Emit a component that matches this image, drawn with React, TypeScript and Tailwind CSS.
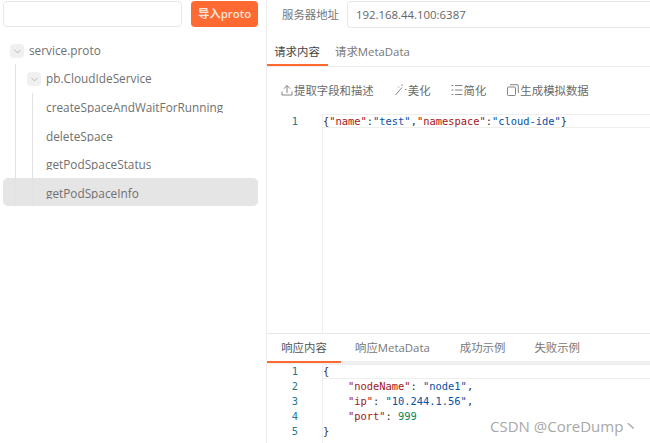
import { ChevronDown } from "lucide-react";

const uiFont =
  "font-['Open_Sans','Noto_Sans_CJK_SC',sans-serif]";
const monoFont =
  "font-['DejaVu_Sans_Mono','Noto_Sans_CJK_SC',monospace]";

function Tree() {
  return (
    <div className={`relative mt-[10px] text-[11.8px] text-[#707070] ${uiFont}`}>
      <div className="absolute left-[15px] top-[27px] h-[142px] w-px bg-[#e2e2e2]" />
      <div className="absolute left-[32px] top-[56px] h-[113px] w-px bg-[#e2e2e2]" />
      <div className="flex h-[28px] items-center pl-[10px]">
        <span className="flex h-[14px] w-[14px] items-center justify-center rounded-sm bg-[#f0f0f0]">
          <ChevronDown size={11} strokeWidth={1.2} className="text-[#888]" />
        </span>
        <span className="ml-[5px]">service.proto</span>
      </div>
      <div className="flex h-[28px] items-center pl-[27px]">
        <span className="flex h-[14px] w-[14px] items-center justify-center rounded-sm bg-[#f0f0f0]">
          <ChevronDown size={11} strokeWidth={1.2} className="text-[#888]" />
        </span>
        <span className="ml-[5px]">pb.CloudIdeService</span>
      </div>
      <div className="flex h-[28px] items-start pl-[46px] pt-[4px] leading-[20px]">
        <span className="h-[16px] overflow-hidden">createSpaceAndWaitForRunning</span>
      </div>
      <div className="flex h-[29px] items-start pl-[46px] pt-[5px] leading-[20px]">
        <span className="h-[16px] overflow-hidden">deleteSpace</span>
      </div>
      <div className="flex h-[28px] items-start pl-[46px] pt-[4px] leading-[20px]">
        <span className="h-[16px] overflow-hidden">getPodSpaceStatus</span>
      </div>
      <div className="mx-[3px] flex h-[28px] w-[255px] items-start rounded-[5px] bg-[#e5e5e5] pl-[43px] pt-[5px] leading-[20px]">
        <span className="h-[16px] overflow-hidden">getPodSpaceInfo</span>
      </div>
    </div>
  );
}

function ExtractIcon() {
  return (
    <svg width="12" height="12" viewBox="0 0 12 12" fill="none" stroke="#777" strokeWidth="0.9">
      <path d="M1 7.5v3.5h10V7.5" />
      <path d="M6 9V1.5M2.8 4.7 6 1.5l3.2 3.2" />
    </svg>
  );
}

function WandIcon() {
  return (
    <svg width="13" height="12" viewBox="0 0 13 12" fill="none" stroke="#777" strokeWidth="0.9">
      <path d="M1.5 11 8 3.5" />
      <path d="M8 .5v1.5M11 5.5h1.5M4 2.5l1 1" />
    </svg>
  );
}

function SimplifyIcon() {
  return (
    <svg width="12" height="12" viewBox="0 0 12 12" fill="none" stroke="#777" strokeWidth="0.9">
      <path d="M0.5 1.5h2M4 1.5h7.5M0.5 6h2M4 6h7.5M0.5 10.5h2M4 10.5h7.5" />
    </svg>
  );
}

function CopyIcon() {
  return (
    <svg width="12" height="12" viewBox="0 0 12 12" fill="none" stroke="#777" strokeWidth="0.9">
      <rect x="0.5" y="3" width="8" height="8.5" rx="1" />
      <path d="M3 .7h7a1.3 1.3 0 0 1 1.3 1.3v7" />
    </svg>
  );
}

const responseLines = [
  <span className="text-[#333]">{"{"}</span>,
  <>
    <span className="pl-[25px] text-[#a31515]">"nodeName"</span>
    <span className="text-[#333]">: </span>
    <span className="text-[#0451a5]">"node1"</span>
    <span className="text-[#333]">,</span>
  </>,
  <>
    <span className="pl-[25px] text-[#a31515]">"ip"</span>
    <span className="text-[#333]">: </span>
    <span className="text-[#0451a5]">"10.244.1.56"</span>
    <span className="text-[#333]">,</span>
  </>,
  <>
    <span className="pl-[25px] text-[#a31515]">"port"</span>
    <span className="text-[#333]">: </span>
    <span className="text-[#098658]">999</span>
  </>,
  <span className="text-[#333]">{"}"}</span>,
];

export default function App() {
  return (
    <div className="relative flex h-[443px] w-[650px] overflow-hidden bg-white">
      <aside className="h-full w-[267px] shrink-0 border-r border-[#ececec]">
        <div className="flex pl-[3px] pt-[1px]">
          <div className="h-[26px] w-[179px] rounded-[4px] border border-[#e8e8e8] bg-white" />
          <button
            type="button"
            className={`ml-[9px] h-[26px] w-[67px] rounded-[4px] bg-[#ff6a33] text-[11.4px] font-semibold text-[#fde3d8] ${uiFont}`}
          >
            导入proto
          </button>
        </div>
        <Tree />
      </aside>

      <main className={`flex min-w-0 flex-1 flex-col text-[11.4px] text-[#777] ${uiFont}`}>
        <div className="flex h-[28px] items-center pl-[15px] pt-[1px]">
          <span className="w-[65px] shrink-0">服务器地址</span>
          <div className="flex h-[27px] flex-1 items-center rounded-l-[4px] border border-r-0 border-[#e8e8e8] pl-[8px] text-[#666]">
            192.168.44.100:6387
          </div>
        </div>

        <div className="mt-[10px] flex h-[29px] items-center border-b border-[#ededed] pb-[1px]">
          <div className="relative flex h-full w-[61px] items-center justify-center pr-[1px] text-[#444]">
            请求内容
            <div className="absolute bottom-[-1px] left-0 h-[2px] w-full bg-[#ff6a33]" />
          </div>
          <span className="ml-[7px]">请求MetaData</span>
        </div>

        <div className="flex h-[47px] items-center pl-[14px] text-[#6a6a6a]">
          <span className="flex items-center gap-[1px]">
            <ExtractIcon />
            提取字段和描述
          </span>
          <span className="ml-[20px] flex items-center gap-[1px]">
            <WandIcon />
            美化
          </span>
          <span className="ml-[20px] flex items-center gap-[1px]">
            <SimplifyIcon />
            简化
          </span>
          <span className="ml-[21px] flex items-center gap-[1px]">
            <CopyIcon />
            生成模拟数据
          </span>
        </div>

        <div className={`flex flex-1 text-[10.4px] ${monoFont}`}>
          <div className="w-[55px] shrink-0 pr-[24px] text-right leading-[14px] text-[#237893]">1</div>
          <div className="flex-1 border-l border-[#eee]">
            <div className="h-[14px] border-y border-[#eee] leading-[12px] whitespace-nowrap">
              <span className="text-[#333]">{"{"}</span>
              <span className="text-[#a31515]">"name"</span>
              <span className="text-[#333]">:</span>
              <span className="text-[#0451a5]">"test"</span>
              <span className="text-[#333]">,</span>
              <span className="text-[#a31515]">"namespace"</span>
              <span className="text-[#333]">:</span>
              <span className="text-[#0451a5]">"cloud-ide"</span>
              <span className="text-[#333]">{"}"}</span>
            </div>
          </div>
        </div>

        <div className="flex h-[31px] items-center border-t border-b-[3px] border-t-[#e8e8e8] border-b-[#f0f0f0] text-[#777]">
          <div className="relative flex h-full w-[74px] items-center justify-center text-[#555]">
            响应内容
            <div className="absolute bottom-[-2px] left-0 h-[2px] w-full bg-[#ff6a33]" />
          </div>
          <span className="ml-[14px]">响应MetaData</span>
          <span className="ml-[30px]">成功示例</span>
          <span className="ml-[29px]">失败示例</span>
        </div>

        <div className={`flex h-[79px] text-[10.4px] leading-[15px] ${monoFont}`}>
          <div className="w-[55px] shrink-0 pr-[24px] text-right text-[#237893]">
            {responseLines.map((_, i) => (
              <div key={i}>{i + 1}</div>
            ))}
          </div>
          <div className="flex-1 border-l border-[#eee]">
            {responseLines.map((line, i) => (
              <div key={i} className={`h-[15px] whitespace-pre ${i === 0 ? "border-y border-[#eee] leading-[13px]" : ""}`}>
                {line}
              </div>
            ))}
          </div>
        </div>
      </main>

      <div className={`absolute left-[490px] top-[416px] text-[15px] leading-[20px] text-[#a8a8a8] ${uiFont}`}>
        CSDN @CoreDump丶
      </div>
    </div>
  );
}
